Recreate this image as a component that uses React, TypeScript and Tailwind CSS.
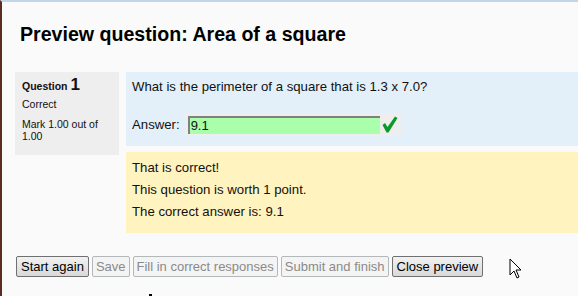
const font = { fontFamily: '"Liberation Sans", Arial, sans-serif' };

const Btn = ({ label, disabled }: { label: string; disabled?: boolean }) => (
  <button
    disabled={disabled}
    className={
      disabled
        ? 'h-[21px] px-[3px] rounded-[2px] border border-[#b3b8bb] bg-[#f4f4f4] text-[13px] leading-none text-[#8a8a8a]'
        : 'h-[21px] px-[4px] rounded-[2px] border border-[#707070] bg-gradient-to-b from-[#f2f2f2] to-[#d9d9d9] text-[13px] leading-none text-black'
    }
  >
    {label}
  </button>
);

// heavy green tick like the Moodle "correct" icon
const Tick = () => (
  <svg width="16" height="17" viewBox="0 0 16 17" className="ml-[2px]">
    <path d="M0.5 9 L3 7 L5.5 11 L13 0.5 L15.5 2 L6.5 16.5 L4.5 16.5 Z" fill="#0a9a2a" />
  </svg>
);

export default function App() {
  return (
    <div
      className="relative w-[578px] h-[296px] overflow-hidden bg-[#fafafa] border-t-[2px] border-t-[#c4d4ea] border-l-[2px] border-l-[#5b2c24] text-[#111]"
      style={font}
    >
      <h2 className="ml-[18px] mt-[20px] text-[19.6px] font-bold leading-[24px] text-black">
        Preview question: Area of a square
      </h2>

      <div className="mt-[26px] ml-[13px] flex gap-[7px]">
        {/* info */}
        <div className="w-[104px] h-[83px] self-start bg-[#eeeeee] px-[7px] pt-[7px] text-[10.5px] leading-[12px]">
          <div className="flex items-baseline gap-[3px] font-bold">
            <span>Question</span>
            <span className="text-[17px]">1</span>
          </div>
          <div className="mt-[6px]">Correct</div>
          <div className="mt-[8px]">Mark 1.00 out of 1.00</div>
        </div>

        <div className="flex-1 flex flex-col gap-[6px]">
          {/* formulation */}
          <div className="h-[74px] bg-[#e3f0fa] px-[6px] pt-[7px] text-[13.2px]">
            <p className="leading-[15px]">What is the perimeter of a square that is 1.3 x 7.0?</p>
            <div className="mt-[19px] flex items-center">
              <span className="mr-[5px]">Answer:</span>
              <div className="flex items-center bg-[#eeeeee] h-[23px] pl-[3px] pr-[3px]">
                <div className="w-[192px] h-[18px] bg-[#aaffaa] border-t-[2px] border-l-[2px] border-t-[#808080] border-l-[#808080] pl-[1px] text-[13px] leading-[16px]">
                  9.1
                </div>
                <Tick />
              </div>
            </div>
          </div>

          {/* outcome */}
          <div className="h-[81px] bg-[#fff3bf] px-[6px] pt-[8px] text-[13.2px] leading-[15px] flex flex-col gap-[7px]">
            <p>That is correct!</p>
            <p>This question is worth 1 point.</p>
            <p>The correct answer is: 9.1</p>
          </div>
        </div>
      </div>

      <div className="mt-[23px] ml-[14px] flex gap-[3px]">
        <Btn label="Start again" />
        <Btn label="Save" disabled />
        <Btn label="Fill in correct responses" disabled />
        <Btn label="Submit and finish" disabled />
        <Btn label="Close preview" />
      </div>

      {/* mouse pointer */}
      <svg className="absolute left-[507px] top-[256px]" width="14" height="22" viewBox="0 0 14 22">
        <path d="M1 1 L1 17 L5 13 L8 20 L10 19 L7 12 L12 12 Z" fill="white" stroke="black" strokeWidth="1" />
      </svg>
      <div className="absolute left-[147px] top-[292px] w-[3px] h-[2px] bg-black" />
    </div>
  );
}
